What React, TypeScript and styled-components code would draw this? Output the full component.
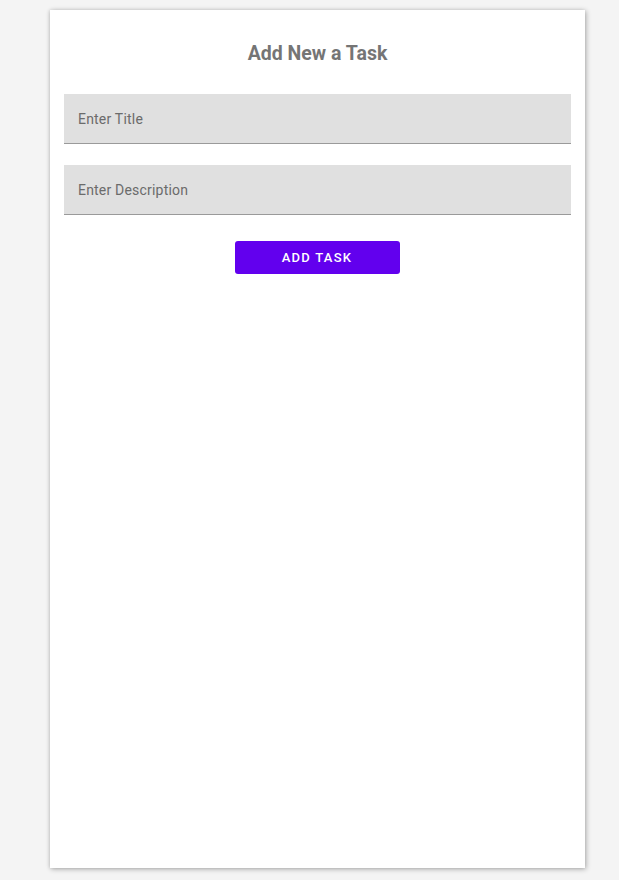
import React from "react";
import styled, { createGlobalStyle } from "styled-components";

const Global = createGlobalStyle`
  html, body { margin: 0; padding: 0; background: #f4f4f4; }
  body { font-family: Roboto, "Noto Sans", Arial, sans-serif; }
  * { box-sizing: border-box; }
`;

const Page = styled.div`
  width: 619px;
  height: 880px;
  padding: 10px 0 0 50px;
  overflow: hidden;
`;

const Card = styled.div`
  width: 535px;
  height: 858px;
  background: #ffffff;
  box-shadow: 1px 1px 5px rgba(0, 0, 0, 0.32), -1px 0 3px rgba(0, 0, 0, 0.08);
  padding: 30px 14px 0 14px;
  display: flex;
  flex-direction: column;
`;

const Title = styled.h1`
  margin: 0;
  text-align: center;
  font-size: 19.5px;
  line-height: 26px;
  font-weight: 700;
  color: #757575;
  padding-top: 1px;
`;

const Form = styled.div`
  margin-top: 27px;
  display: flex;
  flex-direction: column;
  gap: 21px;
`;

const Field = styled.input`
  display: block;
  width: 100%;
  height: 50px;
  margin: 0;
  border: none;
  border-bottom: 1px solid #9a9a9a;
  background: #e0e0e0;
  padding: 0 14px;
  font-family: Roboto, "Noto Sans", Arial, sans-serif;
  font-size: 14px;
  letter-spacing: 0.2px;
  color: #333;
  outline: none;
  &::placeholder { color: #6b6b6b; opacity: 1; }
`;

const ButtonRow = styled.div`
  display: flex;
  justify-content: center;
  margin-top: 26px;
`;

const Button = styled.button`
  width: 165px;
  height: 33px;
  margin-right: 1px;
  border: none;
  border-radius: 3px;
  background: #6200ee;
  color: #ffffff;
  font-family: Roboto, "Noto Sans", Arial, sans-serif;
  font-size: 13px;
  font-weight: 500;
  letter-spacing: 1.25px;
  text-transform: uppercase;
  cursor: pointer;
`;

export default function App() {
  return (
    <>
      <Global />
      <Page>
        <Card>
          <Title>Add New a Task</Title>
          <Form>
            <Field placeholder="Enter Title" />
            <Field placeholder="Enter Description" />
          </Form>
          <ButtonRow>
            <Button>Add Task</Button>
          </ButtonRow>
        </Card>
      </Page>
    </>
  );
}
